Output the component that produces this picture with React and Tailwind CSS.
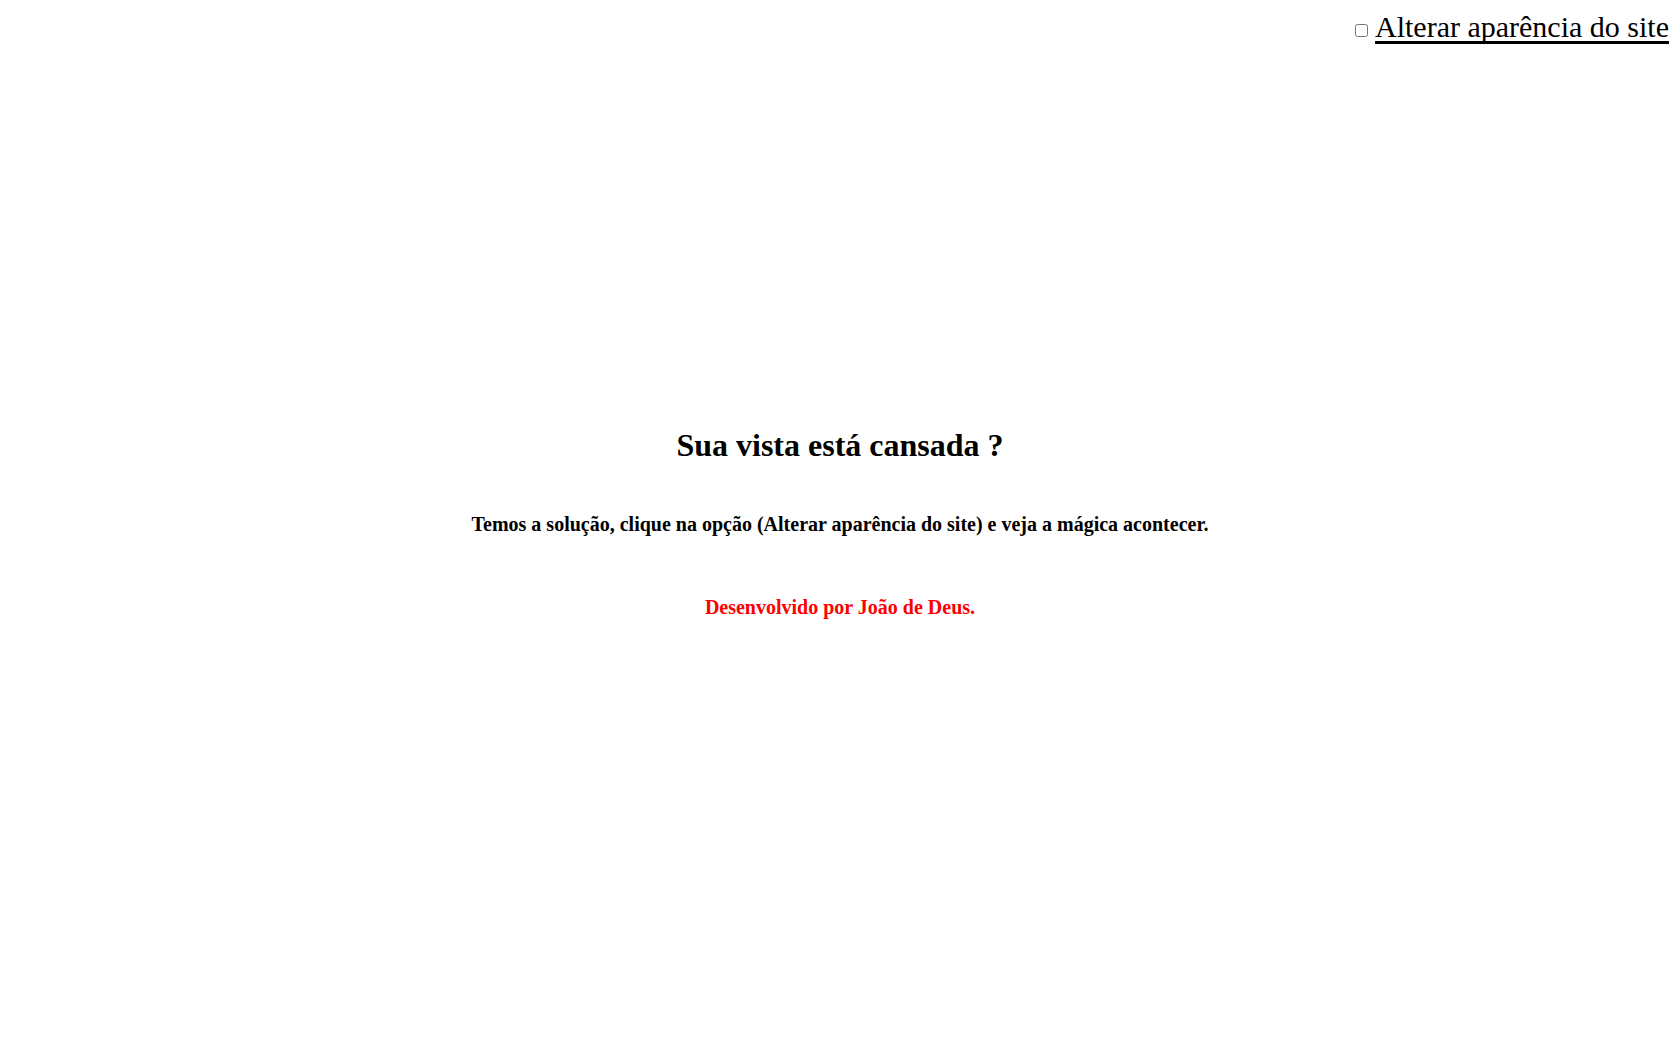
import React, { useState } from 'react';

export default function App() {
  const [dark, setDark] = useState(false);

  return (
    <div
      className={`min-h-screen flex flex-col font-['Liberation_Serif',serif] ${
        dark ? 'bg-black text-white' : 'bg-white text-black'
      }`}
    >
      <div className="flex justify-end items-center pr-[11px] pt-[10px]">
        <input
          type="checkbox"
          id="tema"
          className="w-[13px] h-[13px] mr-[7px] mt-[6px]"
          checked={dark}
          onChange={(e) => setDark(e.target.checked)}
        />
        <label
          htmlFor="tema"
          className="text-[30px] leading-[34px] underline decoration-[3px] underline-offset-[4px] [text-decoration-skip-ink:none] cursor-pointer"
        >
          Alterar aparência do site
        </label>
      </div>

      <main className="flex flex-col items-center text-center mt-[381px]">
        <h1 className="text-[32px] font-bold leading-[40px]">Sua vista está cansada ?</h1>
        <p className="text-[20px] font-bold mt-[44px]">
          Temos a solução, clique na opção (Alterar aparência do site) e veja a mágica acontecer.
        </p>
        <p className="text-[20px] font-bold text-[#ff0000] mt-[53px]">
          Desenvolvido por João de Deus.
        </p>
      </main>
    </div>
  );
}
